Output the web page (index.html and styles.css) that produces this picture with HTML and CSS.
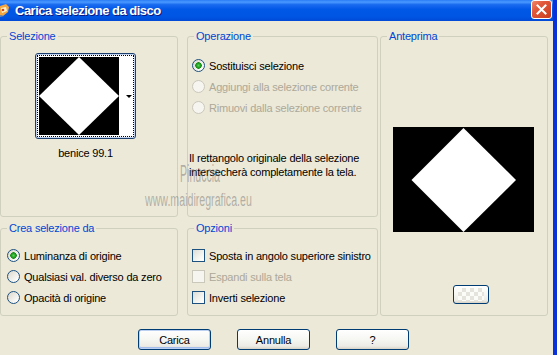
FILE: index.html
```html
<!DOCTYPE html>
<html lang="it">
<head>
    <meta charset="UTF-8">
    <title>Carica selezione da disco</title>
    <link rel="stylesheet" href="styles.css">
</head>
<body>
    <div class="window">
        <!-- Title bar -->
        <div class="titlebar">
            <svg class="app-icon" width="10" height="14" viewBox="0 0 10 14">
                <path d="M0 3 L6 1 L9 4 L8 9 L3 13 L0 12 Z" fill="#f4a640"/>
                <path d="M1 5 L6 4 L7 8 L2 10 Z" fill="#fff4c8"/>
                <circle cx="3" cy="7" r="1.3" fill="#d2421c"/>
                <path d="M0 12 L4 13 L0 14 Z" fill="#7a8aa0"/>
            </svg>
            <span class="title">Carica selezione da disco</span>
            <button class="close" aria-label="Chiudi">
                <svg width="11" height="11" viewBox="0 0 11 11"><path d="M1.5 1.5 L9.5 9.5 M9.5 1.5 L1.5 9.5" stroke="#fff" stroke-width="2" stroke-linecap="square"/></svg>
            </button>
        </div>

        <div class="dialog">
            <div class="groups">
                <fieldset class="group g-sel">
                    <legend>Selezione</legend>
                    <div class="thumb-wrap">
                        <div class="thumb">
                            <div class="thumb-focus">
                                <svg width="80" height="78" viewBox="0 0 80 78">
                                    <rect width="80" height="78" fill="#000"/>
                                    <polygon points="40,0 80,39 40,78 0,39" fill="#fff"/>
                                </svg>
                                <div class="thumb-strip"><span class="drop-arrow"></span></div>
                            </div>
                        </div>
                        <div class="thumb-name">benice 99.1</div>
                    </div>
                </fieldset>

                <fieldset class="group g-op">
                    <legend>Operazione</legend>
                    <div class="options">
                        <label class="opt"><span class="radio checked"></span>Sostituisci selezione</label>
                        <label class="opt disabled"><span class="radio"></span>Aggiungi alla selezione corrente</label>
                        <label class="opt disabled"><span class="radio"></span>Rimuovi dalla selezione corrente</label>
                    </div>
                    <p class="note">Il rettangolo originale della selezione<br>intersecherà completamente la tela.</p>
                </fieldset>

                <fieldset class="group g-prev">
                    <legend>Anteprima</legend>
                    <div class="preview">
                        <svg width="141" height="105" viewBox="0 0 141 105">
                            <rect width="141" height="105" fill="#000"/>
                            <polygon points="70.5,1 123,53 70.5,105 18.5,53" fill="#fff"/>
                        </svg>
                    </div>
                    <button class="xp-btn mini"><span class="checker"></span></button>
                </fieldset>

                <fieldset class="group g-crea">
                    <legend>Crea selezione da</legend>
                    <div class="options">
                        <label class="opt"><span class="radio checked"></span>Luminanza di origine</label>
                        <label class="opt"><span class="radio"></span>Qualsiasi val. diverso da zero</label>
                        <label class="opt"><span class="radio"></span>Opacità di origine</label>
                    </div>
                </fieldset>

                <fieldset class="group g-opz">
                    <legend>Opzioni</legend>
                    <div class="options">
                        <label class="opt"><span class="check"></span>Sposta in angolo superiore sinistro</label>
                        <label class="opt disabled"><span class="check"></span>Espandi sulla tela</label>
                        <label class="opt"><span class="check"></span>Inverti selezione</label>
                    </div>
                </fieldset>
            </div>

            <!-- Dialog buttons -->
            <div class="buttons">
                <button class="xp-btn default">Carica</button>
                <button class="xp-btn">Annulla</button>
                <button class="xp-btn">?</button>
            </div>

            <!-- Watermark over the dialog -->
            <span class="wm wm-name">Pinuccia</span>
            <span class="wm wm-site">www.maidiregrafica.eu</span>
        </div>
    </div>
</body>
</html>
```

FILE: styles.css
```css
body {
    margin: 0;
    font-family: "Liberation Sans", Arial, sans-serif;
    font-size: 11px;
    background: #ece9d8;
}

.window {
    width: 557px;
    height: 355px;
    box-sizing: border-box;
    border-right: 4px solid #0831d9;
    display: flex;
    flex-direction: column;
    overflow: hidden;
}

/* Title bar */
.titlebar {
    height: 21px;
    flex: none;
    display: flex;
    align-items: center;
    background: linear-gradient(#2a7cf5 0%, #4a99ff 10%, #1a6af0 22%, #0058e6 45%, #0055e3 80%, #0049d6 100%);
}

.app-icon {
    flex: none;
    margin-top: -1px;
}

.title {
    margin-left: 5px;
    color: #fff;
    font-weight: bold;
    font-size: 13px;
    letter-spacing: -0.5px;
    text-shadow: 1px 1px #0a1883;
}

.close {
    margin-left: auto;
    margin-right: 1px;
    width: 21px;
    height: 19px;
    padding: 0;
    margin-top: -2px;
    border: 1px solid #fff;
    border-radius: 3px;
    background: linear-gradient(135deg, #f08a6c 0%, #e2583a 35%, #c93d1e 100%);
    display: flex;
    align-items: center;
    justify-content: center;
}

/* Dialog body */
.dialog {
    flex: 1;
    position: relative;
    padding-top: 8px;
    color: #000;
}

.groups {
    display: grid;
    grid-template-columns: 178px 9px 191px 2px 168px;
    grid-template-rows: 188px 95px;
    row-gap: 4px;
    grid-template-areas:
        "sel . op . prev"
        "crea . opz . prev";
}

.group {
    margin: 0;
    padding: 0;
    min-width: 0;
    border: 1px solid #d0d0bf;
    border-radius: 3px;
}

.group legend {
    margin-left: 6px;
    padding: 0 2px;
    color: #0046d5;
    font-size: 11px;
    line-height: 14px;
    letter-spacing: -0.2px;
}

.g-sel { grid-area: sel; }
.g-op { grid-area: op; }
.g-prev { grid-area: prev; }
.g-crea { grid-area: crea; }
.g-opz { grid-area: opz; }

/* Selection thumbnail */
.thumb-wrap {
    width: 101px;
    margin: 10px 0 0 34px;
    display: flex;
    flex-direction: column;
    align-items: center;
}

.thumb {
    width: 101px;
    height: 86px;
    box-sizing: border-box;
    border: 1px solid #1c3f6e;
    border-radius: 3px;
    box-shadow: inset 0 0 0 1px #c2d4f2;
    background: #fff;
    padding: 1px;
}

.thumb-focus {
    height: 100%;
    box-sizing: border-box;
    border: 1px dotted #000;
    padding: 1px 0 1px 1px;
    display: flex;
}

.thumb-strip {
    flex: 1;
    display: flex;
    align-items: center;
    justify-content: flex-end;
    padding-right: 1px;
}

.drop-arrow {
    width: 0;
    height: 0;
    border-left: 3px solid transparent;
    border-right: 3px solid transparent;
    border-top: 3px solid #000;
}

.thumb-name {
    margin-top: 7px;
    line-height: 14px;
    letter-spacing: -0.2px;
}

/* Radio and check rows */
.options {
    margin: 12px 0 0 4px;
}

.g-crea .options {
    margin: 10px 0 0 6px;
}

.g-opz .options {
    margin: 10px 0 0 4px;
}

.opt {
    height: 21px;
    display: flex;
    align-items: center;
    gap: 4px;
    letter-spacing: -0.2px;
    white-space: nowrap;
}

.opt.disabled {
    color: #aca899;
}

.radio {
    width: 13px;
    height: 13px;
    flex: none;
    box-sizing: border-box;
    border-radius: 50%;
    border: 1px solid #1c5180;
    background: linear-gradient(135deg, #dcd7cb, #fbfbf9 80%);
}

.radio.checked {
    background: radial-gradient(circle at 50% 50%, #5cd35a 0, #21a121 2px, #1a8a1a 3px, transparent 3.5px),
        linear-gradient(135deg, #dcd7cb, #fbfbf9 80%);
}

.opt.disabled .radio,
.opt.disabled .check {
    border-color: #cac8bb;
    background: #f6f5ef;
}

.check {
    width: 13px;
    height: 13px;
    flex: none;
    box-sizing: border-box;
    border: 1px solid #1c5180;
    background: linear-gradient(135deg, #dcdcd7, #fdfdfb 85%);
}

.note {
    margin: 33px 0 0 1px;
    line-height: 14px;
    letter-spacing: -0.2px;
}

/* Preview */
.preview {
    margin: 84px 0 0 12px;
    line-height: 0;
}

.mini {
    display: block;
    width: 36px;
    height: 19px;
    margin: 53px 0 0 72px;
    padding: 2px 4px;
}

.checker {
    display: block;
    height: 100%;
    background-color: #fbfbf8;
    background-image: linear-gradient(45deg, #e4e3dc 25%, transparent 25%, transparent 75%, #e4e3dc 75%),
        linear-gradient(45deg, #e4e3dc 25%, transparent 25%, transparent 75%, #e4e3dc 75%);
    background-size: 8px 8px;
    background-position: 0 0, 4px 4px;
}

/* Buttons */
.xp-btn {
    box-sizing: border-box;
    border: 1px solid #003c74;
    border-radius: 3px;
    background: linear-gradient(#ffffff 0%, #f6f6f2 50%, #ecebe4 85%, #d8d2c6 100%);
    font-family: inherit;
    font-size: 11px;
    letter-spacing: -0.2px;
    color: #000;
}

.buttons {
    display: flex;
    gap: 26px;
    padding-left: 138px;
    margin-top: 13px;
}

.buttons .xp-btn {
    width: 73px;
    height: 21px;
    padding: 0;
}

.xp-btn.default {
    box-shadow: inset 0 0 0 1px #bcd0f2, inset 0 -1px 0 1px #a4bdec;
}

/* Watermark */
.wm {
    position: absolute;
    color: rgba(100, 100, 100, 0.45);
    transform-origin: left top;
    white-space: nowrap;
}

.wm-name {
    left: 180px;
    top: 142px;
    font-size: 23px;
    line-height: 23px;
    transform: scaleX(0.46);
}

.wm-site {
    left: 145px;
    top: 170px;
    font-size: 18px;
    line-height: 18px;
    transform: scaleX(0.59);
}
```
